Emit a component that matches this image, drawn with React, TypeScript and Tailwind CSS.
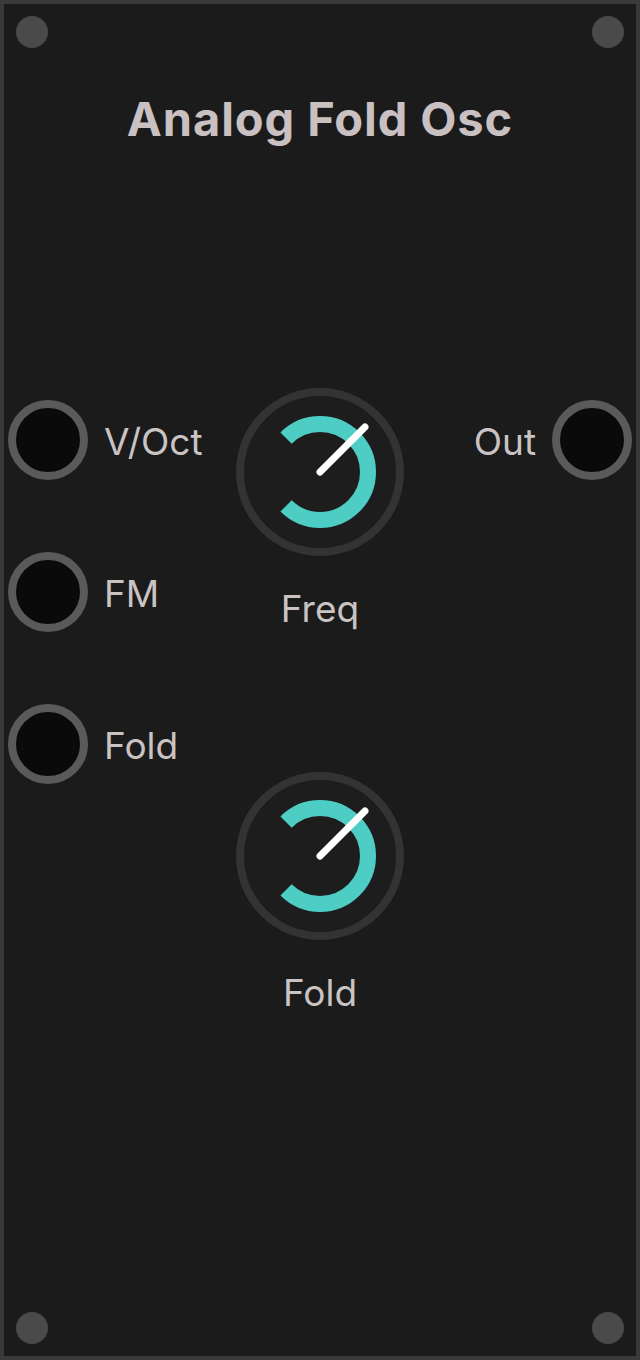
import React from "react";

const labelFont = { fontFamily: "Inter, 'Noto Sans', sans-serif" };

function Screw({ className }: { className: string }) {
  return <div className={`absolute h-8 w-8 rounded-full bg-[#4a4a4a] ${className}`} />;
}

function Jack({ label, side = "left" }: { label: string; side?: "left" | "right" }) {
  return (
    <div className="flex items-center gap-4">
      {side === "right" && (
        <span className="pt-1 text-[37px] leading-[44px] text-[#c9c3c3]" style={labelFont}>
          {label}
        </span>
      )}
      <div className="h-20 w-20 rounded-full border-8 border-[#5a5a5a] bg-[#0a0a0a]" />
      {side === "left" && (
        <span className="pt-1 text-[37px] leading-[44px] text-[#c9c3c3]" style={labelFont}>
          {label}
        </span>
      )}
    </div>
  );
}

function Knob({ label }: { label: string }) {
  return (
    <div className="flex flex-col items-center gap-[31px]">
      <div className="h-[168px] w-[168px] rounded-full border-8 border-[#333333] bg-[#1d1d1d]">
        <svg width="152" height="152" viewBox="0 0 152 152">
          {/* value arc, gap on the left */}
          <path
            d="M 42.06 42.06 A 48 48 0 1 1 42.06 109.94"
            fill="none"
            stroke="#4ecdc4"
            strokeWidth="16"
          />
          <line x1="76" y1="76" x2="121" y2="31" stroke="#ffffff" strokeWidth="7" strokeLinecap="round" />
        </svg>
      </div>
      <span className="text-[37px] leading-[44px] text-[#c9c3c3]" style={labelFont}>
        {label}
      </span>
    </div>
  );
}

export default function App() {
  return (
    <div className="relative h-[1360px] w-[640px] border-4 border-[#3a3a3a] bg-[#1b1b1b] px-1">
      <Screw className="left-3 top-3" />
      <Screw className="right-3 top-3" />
      <Screw className="bottom-3 left-3" />
      <Screw className="bottom-3 right-3" />

      <h1
        className="pt-[87px] text-center text-[47px] font-bold leading-[56px] tracking-[0.9px] text-[#c9c1c1]"
        style={labelFont}
      >
        Analog Fold Osc
      </h1>

      <div className="mt-[241px] grid grid-cols-[1fr_auto_1fr] items-start">
        <div className="mt-3 flex flex-col gap-[72px]">
          <Jack label="V/Oct" />
          <Jack label="FM" />
          <Jack label="Fold" />
        </div>
        <div className="flex flex-col items-center gap-[141px]">
          <Knob label="Freq" />
          <Knob label="Fold" />
        </div>
        <div className="mt-3 flex justify-end">
          <Jack label="Out" side="right" />
        </div>
      </div>
    </div>
  );
}
